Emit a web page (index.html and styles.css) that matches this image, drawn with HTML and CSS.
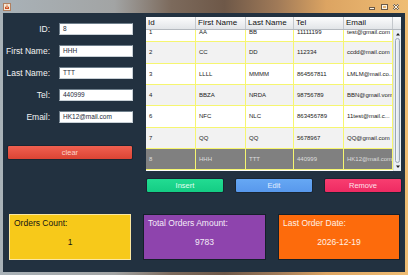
FILE: index.html
```html
<!DOCTYPE html>
<html lang="en">
<head>
  <meta charset="UTF-8">
  <title>Orders</title>
  <link rel="stylesheet" href="styles.css">
</head>
<body>
  <div class="window">
    <div class="titlebar">
      <svg class="app-icon" width="8" height="8" viewBox="0 0 8 8">
        <rect x="0.5" y="0.5" width="7" height="7" fill="#f4e8d8" stroke="#b08060"/>
        <path d="M2 5.5h4M2.5 4h3v1.5h-3z" stroke="#d05020" fill="none"/>
        <path d="M4 1.5c-1 1 1 1 0 2" stroke="#e07030" fill="none"/>
      </svg>
      <div class="controls">
        <svg width="8" height="6" viewBox="0 0 8 6"><rect x="1.5" y="3.5" width="5" height="2" fill="#f8f2e4" stroke="#6a5a48"/></svg>
        <svg width="8" height="6" viewBox="0 0 8 6"><rect x="1.5" y="0.5" width="6" height="5" fill="none" stroke="#6a5a48"/><rect x="2.5" y="1.5" width="4" height="3" fill="none" stroke="#f8f2e4"/></svg>
        <svg width="8" height="6" viewBox="0 0 8 6"><path d="M1.5 0.5l5 5M6.5 0.5l-5 5" stroke="#6a5a48" stroke-width="2"/><path d="M1.5 0.5l5 5M6.5 0.5l-5 5" stroke="#f8f2e4" stroke-width="1"/></svg>
      </div>
    </div>

    <div class="content">
      <div class="top">
        <div class="form">
          <div class="fields">
            <label>ID:</label><div class="field">8</div>
            <label>First Name:</label><div class="field">HHH</div>
            <label>Last Name:</label><div class="field">TTT</div>
            <label>Tel:</label><div class="field">440999</div>
            <label>Email:</label><div class="field">HK12@mail.com</div>
          </div>
          <div class="btn clear">clear</div>
        </div>

        <div class="main">
          <div class="table">
            <div class="thead">
              <div class="th c-id">Id</div>
              <div class="th c-first">First Name</div>
              <div class="th c-last">Last Name</div>
              <div class="th c-tel">Tel</div>
              <div class="th c-email">Email</div>
              <div class="th corner"></div>
            </div>
            <div class="tbody">
              <div class="rows">
                <div class="row first">
                  <div class="cell c-id">1</div><div class="cell c-first">AA</div><div class="cell c-last">BB</div><div class="cell c-tel">11111199</div><div class="cell c-email">test@gmail.com</div>
                </div>
                <div class="row odd">
                  <div class="cell c-id">2</div><div class="cell c-first">CC</div><div class="cell c-last">DD</div><div class="cell c-tel">112334</div><div class="cell c-email">ccdd@mail.com</div>
                </div>
                <div class="row">
                  <div class="cell c-id">3</div><div class="cell c-first">LLLL</div><div class="cell c-last">MMMM</div><div class="cell c-tel">864567811</div><div class="cell c-email">LMLM@mail.co...</div>
                </div>
                <div class="row odd">
                  <div class="cell c-id">4</div><div class="cell c-first">BBZA</div><div class="cell c-last">NRDA</div><div class="cell c-tel">98756789</div><div class="cell c-email">BBN@gmail.vom</div>
                </div>
                <div class="row">
                  <div class="cell c-id">6</div><div class="cell c-first">NFC</div><div class="cell c-last">NLC</div><div class="cell c-tel">863456789</div><div class="cell c-email">11test@mail.c...</div>
                </div>
                <div class="row odd">
                  <div class="cell c-id">7</div><div class="cell c-first">QQ</div><div class="cell c-last">QQ</div><div class="cell c-tel">5678967</div><div class="cell c-email">QQ@gmail.com</div>
                </div>
                <div class="row selected">
                  <div class="cell c-id">8</div><div class="cell c-first">HHH</div><div class="cell c-last">TTT</div><div class="cell c-tel">440999</div><div class="cell c-email">HK12@mail.com</div>
                </div>
              </div>
              <div class="scrollbar">
                <svg class="arrow" width="8" height="6" viewBox="0 0 8 6"><path d="M2 4.5h4L4 2z" fill="#222"/></svg>
                <div class="thumb"></div>
                <svg class="arrow" width="8" height="6" viewBox="0 0 8 6"><path d="M2 1.5h4L4 4z" fill="#222"/></svg>
              </div>
            </div>
          </div>

          <div class="actions">
            <div class="btn insert">Insert</div>
            <div class="btn edit">Edit</div>
            <div class="btn remove">Remove</div>
          </div>
        </div>
      </div>

      <div class="stats">
        <div class="card yellow">
          <div class="card-title">Orders Count:</div>
          <div class="card-value">1</div>
        </div>
        <div class="card purple">
          <div class="card-title">Total Orders Amount:</div>
          <div class="card-value">9783</div>
        </div>
        <div class="card orange">
          <div class="card-title">Last Order Date:</div>
          <div class="card-value">2026-12-19</div>
        </div>
      </div>
    </div>
  </div>
</body>
</html>
```

FILE: styles.css
```css
*{
  margin: 0;
  padding: 0;
  box-sizing: border-box;
}

body{
  width: 408px;
  height: 275px;
  overflow: hidden;
  font-family: "Liberation Sans", Arial, sans-serif;
}

.window{
  width: 408px;
  height: 275px;
  display: flex;
  flex-direction: column;
  background: linear-gradient(90deg, #a9b2b8 0%, #a2a4a4 28%, #7c6a5c 42%, #6e5848 55%, #a07a58 68%, #dca462 80%, #efbd74 100%);
}

.titlebar{
  height: 13px;
  display: flex;
  align-items: center;
  justify-content: space-between;
  padding: 0 8px 0 3px;
}

.controls{
  display: flex;
  gap: 4px;
}

.content{
  flex: 1;
  margin: 0 3px 3px 3px;
  background: #223140;
  display: flex;
  flex-direction: column;
}

.top{
  display: flex;
  padding-top: 4px;
}

/* left form */
.form{
  width: 143px;
  padding-top: 6px;
}

.fields{
  display: grid;
  grid-template-columns: 47px 74px;
  grid-auto-rows: 12px;
  column-gap: 9px;
  row-gap: 10px;
  align-items: center;
}

.fields label{
  text-align: right;
  color: #f2f2f2;
  font-size: 8.5px;
}

.field{
  height: 12px;
  background: #fff;
  border: 1px solid #6f7f8c;
  border-right-color: #c8d0d6;
  border-bottom-color: #c8d0d6;
  font-size: 6.5px;
  line-height: 10px;
  padding-left: 3px;
  color: #1c2a3a;
}

.btn{
  height: 15px;
  border: 1px solid #1a2632;
  border-radius: 2px;
  font-size: 7.5px;
  display: flex;
  align-items: center;
  justify-content: center;
}

.clear{
  width: 126px;
  margin: 22px 0 0 4px;
  background: linear-gradient(#f06050, #dc4434);
  color: #fbd4cc;
}

/* table */
.main{
  width: 256px;
}

.table{
  width: 255px;
  height: 154px;
  background: #fff;
  display: flex;
  flex-direction: column;
  overflow: hidden;
}

.thead{
  height: 13px;
  display: flex;
  background: linear-gradient(#fcfcfd, #e2e5e8);
  border-bottom: 1px solid #b4b9bf;
}

.th{
  font-size: 8px;
  color: #111;
  padding-left: 2px;
  line-height: 12px;
  border-right: 1px solid #c4c8cc;
}

.th.corner{
  width: 8px;
  border-right: none;
}

.c-id{ width: 50px; }
.c-first{ width: 50px; }
.c-last{ width: 48px; }
.c-tel{ width: 50px; }
.c-email{ width: 49px; }

.tbody{
  flex: 1;
  display: flex;
  overflow: hidden;
}

.rows{
  width: 247px;
  overflow: hidden;
}

.row{
  display: flex;
  height: 21.33px;
  border-bottom: 1px solid #f6f670;
  background: #fff;
}

/* list is scrolled down a little */
.row.first{
  height: 20.33px;
  margin-top: -8px;
}

.row.odd{
  background: #f2f2f2;
}

.row.selected{
  background: #808080;
}

.cell{
  display: flex;
  align-items: center;
  padding-left: 3px;
  font-size: 6px;
  color: #222;
  white-space: nowrap;
  overflow: hidden;
  border-right: 1px solid #f6f670;
}

.row.selected .cell{
  color: #dedede;
}

.scrollbar{
  width: 8px;
  display: flex;
  flex-direction: column;
  background: #e9eef3;
  border-left: 1px solid #d6dde4;
  padding: 1px 0;
}

.arrow{
  flex: none;
}

.thumb{
  flex: 1;
  margin: 1px 1px;
  border: 1px solid #9aa6b2;
  border-radius: 3px;
  background: linear-gradient(90deg, #f4f7fa, #dbe2ea);
}

/* buttons */
.actions{
  display: flex;
  justify-content: space-between;
  margin-top: 7px;
}

.actions .btn{
  width: 78px;
}

.insert{
  background: linear-gradient(#22dc92, #14cc84);
  color: #e2fff0;
}

.edit{
  background: linear-gradient(#66a8f4, #5898ec);
  color: #e0ecff;
}

.remove{
  background: linear-gradient(#f83e70, #ee2a62);
  color: #ffe0ea;
}

/* stats */
.stats{
  display: grid;
  grid-template-columns: 122px 123px 122px;
  column-gap: 12px;
  margin-top: 21px;
  padding-left: 6px;
}

.card{
  height: 46px;
  border: 1px solid #15202a;
}

.card-title{
  font-size: 8.5px;
  padding: 3px 0 0 4px;
  line-height: 10px;
}

.card-value{
  font-size: 8.5px;
  text-align: center;
  margin-top: 9px;
}

.yellow{
  background: #f7c91a;
  border-color: #fbe7a0;
  color: #141414;
}

.purple{
  background: #8e44ad;
  color: #f4ecf8;
}

.orange{
  background: #fd6b0c;
  color: #fff0e4;
}
```
